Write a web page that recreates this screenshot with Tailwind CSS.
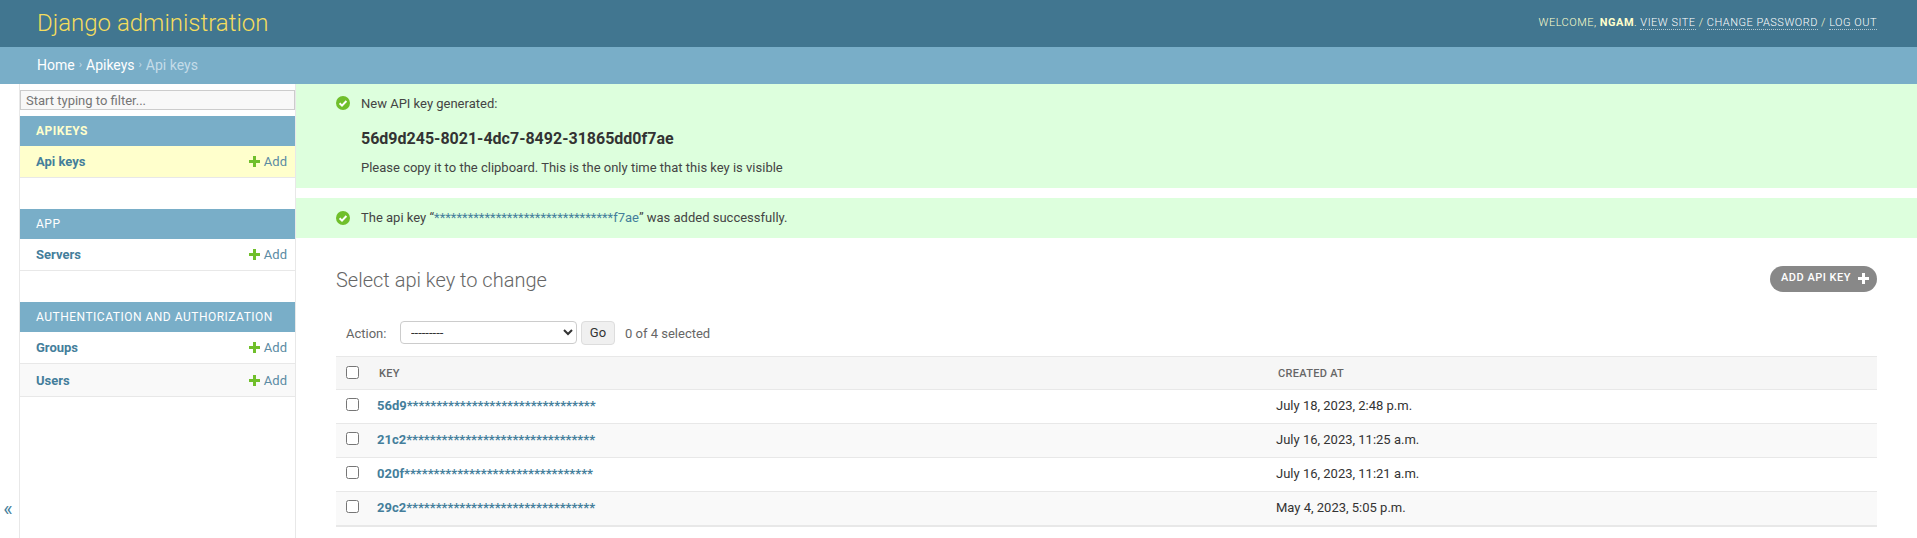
<!DOCTYPE html>
<html lang="en">
<head>
  <meta charset="UTF-8" />
  <title>Select api key to change | Django site admin</title>
  <script src="https://cdn.jsdelivr.net/npm/@tailwindcss/browser@4"></script>
</head>
<body class="h-[538px] overflow-hidden bg-white font-['Roboto',sans-serif] text-[14px] text-[#333]">
  <!-- header -->
  <header class="h-[47px] bg-[#417690] flex items-center justify-between pl-[37px] pr-[40px]">
    <h1 class="text-[24px] font-light text-[#f5dd5d] leading-[47px]">Django administration</h1>
    <div class="text-[11px] tracking-[0.5px] text-[#ffc] font-light">
      WELCOME, <strong class="font-bold">NGAM</strong>.
      <a href="#" class="text-white border-b border-dotted border-white/60">VIEW SITE</a> /
      <a href="#" class="text-white border-b border-dotted border-white/60">CHANGE PASSWORD</a> /
      <a href="#" class="text-white border-b border-dotted border-white/60">LOG OUT</a>
    </div>
  </header>

  <!-- breadcrumbs -->
  <nav class="h-[37px] bg-[#79aec8] flex items-center pl-[37px] text-[14px] text-[#c4dce8]">
    <a href="#" class="text-white">Home</a><span class="mx-[4px] text-[11px]">›</span><a href="#" class="text-white">Apikeys</a><span class="mx-[4px] text-[11px]">›</span><span>Api keys</span>
  </nav>

  <div class="flex h-[454px]">
    <!-- sidebar toggle -->
    <div class="w-[20px] shrink-0 border-r border-[#e8e8e8] flex items-end justify-center pb-[19px] pr-[3px] text-[#447e9b] text-[20px] leading-none">«</div>

    <!-- sidebar -->
    <aside class="w-[276px] shrink-0 border-r border-[#e8e8e8] pt-[6px]">
      <input type="text" placeholder="Start typing to filter..." class="block w-full h-[20px] border border-[#ccc] bg-[#f8f8f8] px-[5px] text-[13px] placeholder:text-[#757575] mb-[6px]" />

      <div class="mb-[31px]">
        <div class="h-[30px] bg-[#79aec8] flex items-center pl-[16px] text-[12px] tracking-[0.5px] text-[#ffc] font-bold">APIKEYS</div>
        <div class="h-[32px] bg-[#ffc] border-b border-[#e8e8e8] flex items-center justify-between pl-[16px] pr-[8px] text-[13px]">
          <a href="#" class="font-bold text-[#447e9b]">Api keys</a>
          <a href="#" class="flex items-center gap-[4px] text-[#5b8ba3]">
            <svg class="ml-[1px]" width="11" height="11" viewBox="0 0 11 11"><path d="M4 0h3v4h4v3H7v4H4V7H0V4h4z" fill="#70bf2b"/></svg>Add</a>
        </div>
      </div>

      <div class="mb-[31px]">
        <div class="h-[30px] bg-[#79aec8] flex items-center pl-[16px] text-[12px] tracking-[0.5px] text-white">APP</div>
        <div class="h-[32px] border-b border-[#e8e8e8] flex items-center justify-between pl-[16px] pr-[8px] text-[13px]">
          <a href="#" class="font-bold text-[#447e9b]">Servers</a>
          <a href="#" class="flex items-center gap-[4px] text-[#5b8ba3]">
            <svg width="11" height="11" viewBox="0 0 11 11"><path d="M4 0h3v4h4v3H7v4H4V7H0V4h4z" fill="#70bf2b"/></svg>Add</a>
        </div>
      </div>

      <div>
        <div class="h-[30px] bg-[#79aec8] flex items-center pl-[16px] text-[12px] tracking-[0.5px] text-white">AUTHENTICATION AND AUTHORIZATION</div>
        <div class="h-[32px] border-b border-[#e8e8e8] flex items-center justify-between pl-[16px] pr-[8px] text-[13px]">
          <a href="#" class="font-bold text-[#447e9b]">Groups</a>
          <a href="#" class="flex items-center gap-[4px] text-[#5b8ba3]">
            <svg width="11" height="11" viewBox="0 0 11 11"><path d="M4 0h3v4h4v3H7v4H4V7H0V4h4z" fill="#70bf2b"/></svg>Add</a>
        </div>
        <div class="h-[33px] bg-[#f9f9f9] border-b border-[#e8e8e8] flex items-center justify-between pl-[16px] pr-[8px] pt-[1px] text-[13px]">
          <a href="#" class="font-bold text-[#447e9b]">Users</a>
          <a href="#" class="flex items-center gap-[4px] text-[#5b8ba3]">
            <svg width="11" height="11" viewBox="0 0 11 11"><path d="M4 0h3v4h4v3H7v4H4V7H0V4h4z" fill="#70bf2b"/></svg>Add</a>
        </div>
      </div>
    </aside>

    <!-- main -->
    <main class="flex-1 min-w-0">
      <div class="h-[104px] bg-[#dfd] pl-[40px] flex gap-[11px] pt-[12px] mb-[10px] text-[#444]">
        <svg class="shrink-0" width="14" height="14" viewBox="0 0 14 14"><circle cx="7" cy="7" r="7" fill="#70bf2b"/><path d="M3.6 7.2l2.4 2.4 4.4-4.6" fill="none" stroke="#fff" stroke-width="2"/></svg>
        <div class="text-[13px] leading-[16px]">
          <p>New API key generated:</p>
          <p class="mt-[17px] text-[16px] font-bold leading-[20px] text-[#333]">56d9d245-8021-4dc7-8492-31865dd0f7ae</p>
          <p class="mt-[11px]">Please copy it to the clipboard. This is the only time that this key is visible</p>
        </div>
      </div>
      <div class="h-[40px] bg-[#dfd] pl-[40px] flex items-center gap-[11px] text-[13px] text-[#444]">
        <svg class="shrink-0" width="14" height="14" viewBox="0 0 14 14"><circle cx="7" cy="7" r="7" fill="#70bf2b"/><path d="M3.6 7.2l2.4 2.4 4.4-4.6" fill="none" stroke="#fff" stroke-width="2"/></svg>
        <p>The api key “<a href="#" class="text-[#447e9b]">********************************f7ae</a>” was added successfully.</p>
      </div>

      <div class="pl-[40px] pr-[40px]">
        <div class="flex items-center justify-between pt-[28px] h-[83px] pb-[28px]">
          <h1 class="text-[20px] font-light text-[#666]">Select api key to change</h1>
          <a href="#" class="-mt-[1px] pb-[1px] h-[26px] w-[107px] rounded-[13px] bg-[#888] text-white text-[11px] font-medium tracking-[0.5px] flex items-center pl-[11px] gap-[7px]">ADD API KEY
            <svg width="11" height="11" viewBox="0 0 11 11"><path d="M4 0h3v4h4v3H7v4H4V7H0V4h4z" fill="#fff"/></svg></a>
        </div>

        <div class="h-[35px] flex items-start pl-[10px] text-[13px] text-[#666]">
          <label class="mt-[3px] w-[54px]">Action:</label>
          <select class="w-[177px] h-[23px] border border-[#ccc] rounded-[4px] bg-white text-[#333] text-[13px] px-[6px]"><option>---------</option></select>
          <button class="ml-[4px] w-[34px] h-[24px] border border-[#ddd] rounded-[4px] bg-[#f0f0f0] text-[#333] text-[13px]">Go</button>
          <span class="ml-[10px] mt-[3px]">0 of 4 selected</span>
        </div>

        <table class="w-[1541px] border-collapse text-[13px]">
          <thead>
            <tr class="h-[33px] bg-[#f6f6f6] border-y border-[#e8e8e8] text-[11px] font-bold text-[#666]">
              <th class="w-[41px] pl-[10px] pb-[2px] text-left"><input type="checkbox" class="block w-[13px] h-[13px]" /></th>
              <th class="w-[899px] pl-[2px] pt-[2px] text-left font-medium tracking-[0.3px]">KEY</th>
              <th class="text-left pl-[2px] pt-[2px] font-medium tracking-[0.3px]">CREATED AT</th>
            </tr>
          </thead>
          <tbody>
            <tr class="h-[34px] border-b border-[#e8e8e8]">
              <td class="pl-[10px] pb-[4px]"><input type="checkbox" class="block w-[13px] h-[13px]" /></td>
              <td class="pb-[2px] font-bold text-[#447e9b]">56d9********************************</td>
              <td class="pb-[2px]">July 18, 2023, 2:48 p.m.</td>
            </tr>
            <tr class="h-[34px] border-b border-[#e8e8e8] bg-[#f9f9f9]">
              <td class="pl-[10px] pb-[4px]"><input type="checkbox" class="block w-[13px] h-[13px]" /></td>
              <td class="pb-[2px] font-bold text-[#447e9b]">21c2********************************</td>
              <td class="pb-[2px]">July 16, 2023, 11:25 a.m.</td>
            </tr>
            <tr class="h-[34px] border-b border-[#e8e8e8]">
              <td class="pl-[10px] pb-[4px]"><input type="checkbox" class="block w-[13px] h-[13px]" /></td>
              <td class="pb-[2px] font-bold text-[#447e9b]">020f********************************</td>
              <td class="pb-[2px]">July 16, 2023, 11:21 a.m.</td>
            </tr>
            <tr class="h-[34px] border-b-2 border-[#e8e8e8] bg-[#f9f9f9]">
              <td class="pl-[10px] pb-[4px]"><input type="checkbox" class="block w-[13px] h-[13px]" /></td>
              <td class="pb-[2px] font-bold text-[#447e9b]">29c2********************************</td>
              <td class="pb-[2px]">May 4, 2023, 5:05 p.m.</td>
            </tr>
          </tbody>
        </table>
      </div>
    </main>
  </div>
</body>
</html>
